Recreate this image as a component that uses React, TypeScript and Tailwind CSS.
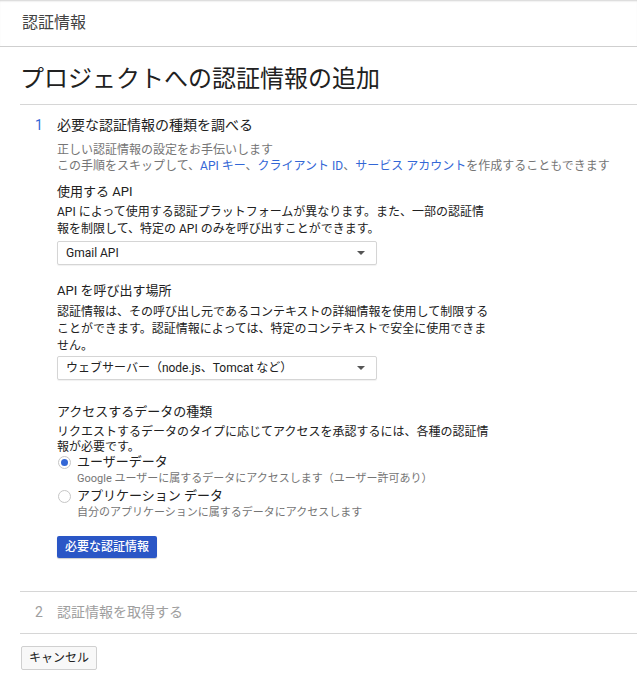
import React from "react";

const font = { fontFamily: "Roboto, 'Noto Sans CJK JP', sans-serif" };

function Select({ value }: { value: string }) {
  return (
    <div className="flex h-[24px] w-[320px] items-center justify-between rounded-[2px] border border-[#d5d5d5] bg-white pl-[8px] pr-[11px] shadow-[0_1px_1px_rgba(0,0,0,0.06)]">
      <span className="text-[12px] text-[#212121]">{value}</span>
      <svg width="8" height="4" viewBox="0 0 8 4">
        <path d="M0 0h8L4 4z" fill="#555" />
      </svg>
    </div>
  );
}

export default function App() {
  return (
    <div className="min-h-[688px] w-full bg-white" style={font}>
      <div className="flex h-[47px] items-center border-b border-[#cfcfcf] pl-[22px] shadow-[inset_0_2px_2px_-1px_rgba(0,0,0,0.18)]">
        <span className="text-[16px] text-[#424242]">認証情報</span>
      </div>
      <div className="ml-[20px] border-b border-[#d6d6d6] pb-[9px] pt-[16px]">
        <h1 className="text-[24px] leading-[32px] text-[#212121]">プロジェクトへの認証情報の追加</h1>
      </div>

      <div className="ml-[20px] border-b border-[#d6d6d6] pb-[33px] pt-[10px]">
        <div className="flex items-center text-[14px] leading-[20px]">
          <span className="w-[37px] pl-[15px] text-[#3367d6]">1</span>
          <span className="text-[#212121]">必要な認証情報の種類を調べる</span>
        </div>
        <div className="pl-[37px]">
          <div className="mt-[7px] text-[12px] leading-[16px] text-[#757575]">
            <div>正しい認証情報の設定をお手伝いします</div>
            <div>
              この手順をスキップして、<span className="text-[#3367d6]">API キー</span>、
              <span className="text-[#3367d6]">クライアント ID</span>、
              <span className="text-[#3367d6]">サービス アカウント</span>を作成することもできます
            </div>
          </div>

          <div className="mt-[10px] text-[13px] leading-[16px] text-[#212121]">使用する API</div>
          <p className="mt-[4px] w-[436px] text-[12px] leading-[17px] text-[#212121]">
            API によって使用する認証プラットフォームが異なります。また、一部の認証情報を制限して、特定の API のみを呼び出すことができます。
          </p>
          <div className="mt-[3px]">
            <Select value="Gmail API" />
          </div>

          <div className="mt-[18px] text-[13px] leading-[16px] text-[#212121]">API を呼び出す場所</div>
          <p className="mt-[5px] w-[436px] text-[12px] leading-[17px] text-[#212121]">
            認証情報は、その呼び出し元であるコンテキストの詳細情報を使用して制限することができます。認証情報によっては、特定のコンテキストで安全に使用できません。
          </p>
          <div className="mt-[1px]">
            <Select value="ウェブサーバー（node.js、Tomcat など）" />
          </div>

          <div className="mt-[24px] text-[13px] leading-[16px] text-[#212121]">アクセスするデータの種類</div>
          <p className="mt-[5px] w-[436px] text-[12px] leading-[15px] text-[#212121]">
            リクエストするデータのタイプに応じてアクセスを承認するには、各種の認証情報が必要です。
          </p>

          <div className="mt-[-2px]">
            <div className="flex items-center">
              <div className="ml-[1px] flex h-[13px] w-[13px] items-center justify-center rounded-full border border-[#c6c6c6] bg-white">
                <div className="h-[7px] w-[7px] rounded-full bg-[#3367d6]" />
              </div>
              <span className="ml-[6px] text-[13px] leading-[18px] text-[#212121]">ユーザーデータ</span>
            </div>
            <div className="pl-[20px] text-[11px] leading-[15px] text-[#757575]">
              Google ユーザーに属するデータにアクセスします（ユーザー許可あり）
            </div>
            <div className="mt-[1px] flex items-center">
              <div className="ml-[1px] h-[13px] w-[13px] rounded-full border border-[#c6c6c6] bg-white" />
              <span className="ml-[6px] text-[13px] leading-[18px] text-[#212121]">アプリケーション データ</span>
            </div>
            <div className="pl-[20px] text-[11px] leading-[15px] text-[#757575]">
              自分のアプリケーションに属するデータにアクセスします
            </div>
          </div>

          <button className="mt-[16px] flex h-[22px] w-[100px] items-center justify-center rounded-[2px] bg-[#2a56c6] text-[12px] font-medium text-white shadow-[0_1px_1px_rgba(0,0,0,0.2)]">
            必要な認証情報
          </button>
        </div>
      </div>

      <div className="ml-[20px] flex h-[42px] items-center border-b border-[#d6d6d6] text-[14px] text-[#9e9e9e]">
        <span className="w-[37px] pl-[15px]">2</span>
        <span>認証情報を取得する</span>
      </div>

      <div className="pl-[21px] pt-[12px]">
        <button className="flex h-[24px] w-[76px] items-center justify-center rounded-[2px] border border-[#d0d0d0] bg-[#f8f8f8] text-[12px] text-[#212121]">
          キャンセル
        </button>
      </div>
    </div>
  );
}
